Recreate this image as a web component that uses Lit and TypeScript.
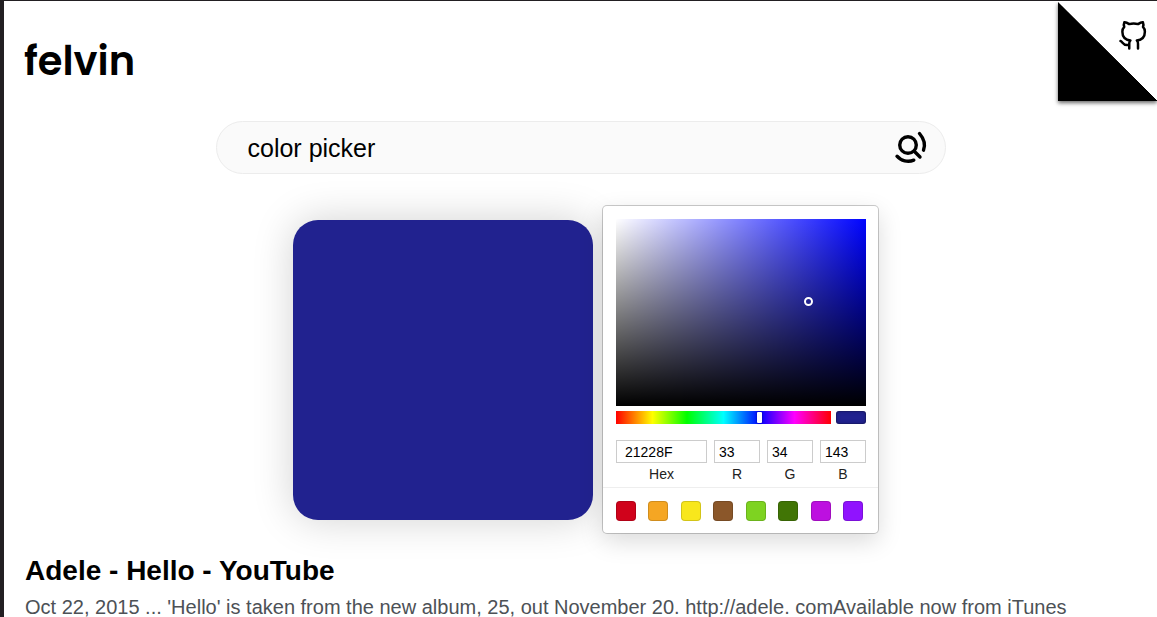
import { LitElement, html, css } from "lit";
import { customElement, state } from "lit/decorators.js";
import { styleMap } from "lit/directives/style-map.js";

const PRESETS = ["#d0021b", "#f5a623", "#f8e71c", "#8b572a", "#7ed321", "#417505", "#bd10e0", "#9013fe"];

@customElement("color-picker")
export class ColorPicker extends LitElement {
  static styles = css`
    :host { display: flex; justify-content: center; align-items: flex-start; gap: 10px; padding-left: 10px; }
    * { box-sizing: border-box; }
    .preview { width: 300px; height: 300px; margin-top: 14px; border-radius: 25px; box-shadow: 0 0 40px rgba(0, 0, 0, 0.18); }
    .panel {
      position: relative; width: 275px; background: #fff; border-radius: 4px;
      box-shadow: 0 0 0 1px rgba(0, 0, 0, 0.2), 0 8px 24px rgba(0, 0, 0, 0.15);
    }
    .controls { padding: 13px 12px 5px 13px; }
    .saturation {
      position: relative; height: 187px;
      background: linear-gradient(to top, #000, transparent), linear-gradient(to right, #fff, transparent), #0004ff;
    }
    .pointer {
      position: absolute; width: 9px; height: 9px; margin: -4px; border-radius: 50%;
      border: 2px solid #fff;
    }
    .bars { display: flex; gap: 5px; margin-top: 5px; height: 13px; }
    .hue {
      appearance: none; flex: 1; min-width: 0; height: 13px; margin: 0;
      background: linear-gradient(to right, #f00 0%, #ff0 17%, #0f0 33%, #0ff 50%, #00f 67%, #f0f 83%, #f00 100%);
    }
    .hue::-webkit-slider-thumb {
      appearance: none; width: 5px; height: 11px; border-radius: 1px; background: #fff;
      box-shadow: 0 0 2px rgba(0, 0, 0, 0.6);
    }
    .current { width: 30px; border-radius: 3px; box-shadow: inset 0 0 0 1px rgba(0, 0, 0, 0.15), inset 0 0 4px rgba(0, 0, 0, 0.25); }
    .fields { display: grid; grid-template-columns: 91fr 46fr 46fr 46fr; gap: 7px; margin-top: 16px; }
    .field { display: flex; flex-direction: column; text-align: center; color: #222; font-size: 14px; line-height: 16px; gap: 3px; }
    .field input {
      width: 100%; height: 23px; padding: 0 4px; border: 1px solid #ccc; color: #000; background: #fff;
      font: inherit; border-radius: 0;
    }
    .field input.hex { padding: 0 8px; }
    .presets { display: flex; justify-content: space-between; padding: 13px 15px 12px 13px; border-top: 1px solid #eee; }
    .preset { width: 20px; height: 20px; padding: 0; border: 0; border-radius: 4px; box-shadow: inset 0 0 0 1px rgba(0, 0, 0, 0.15); }
  `;

  @state() private color = "#21228f";

  render() {
    const n = parseInt(this.color.slice(1), 16);
    const rgb = [n >> 16, (n >> 8) & 255, n & 255];
    const max = Math.max(...rgb);
    const min = Math.min(...rgb);
    const fill = styleMap({ background: this.color });
    return html`
      <div class="preview" style=${fill}></div>
      <div class="panel">
        <div class="controls">
          <div class="saturation">
            <div class="pointer" style=${styleMap({
              left: `${(1 - min / max) * 100}%`,
              top: `${(1 - max / 255) * 100}%`,
            })}></div>
          </div>
          <div class="bars">
            <input class="hue" type="range" min="0" max="360" .value=${"241"} aria-label="Hue" />
            <div class="current" style=${fill}></div>
          </div>
          <div class="fields">
            <label class="field"><input class="hex" .value=${this.color.slice(1).toUpperCase()} />Hex</label>
            ${["R", "G", "B"].map((name, i) => html`
              <label class="field"><input .value=${String(rgb[i])} />${name}</label>`)}
          </div>
        </div>
        <div class="presets">
          ${PRESETS.map((c) => html`
            <button class="preset" aria-label=${c} style=${styleMap({ background: c })}
              @click=${() => (this.color = c)}></button>`)}
        </div>
      </div>
    `;
  }
}

@customElement("app-root")
export class AppRoot extends LitElement {
  static styles = css`
    :host {
      display: block; position: relative; box-sizing: border-box; height: 100vh; overflow: hidden;
      border-top: 1px solid #221f22; border-left: 4px solid #221f22; background: #fff; color: #000;
      font-family: "Liberation Sans", Arial, sans-serif;
    }
    * { box-sizing: border-box; }
    .logo {
      display: block; margin: 36px 20px 0; font: 600 40px/48px Poppins, Inter, sans-serif;
      color: #000; text-decoration: none;
    }
    .corner {
      position: absolute; top: 1px; right: 0; width: 99px; height: 99px;
      background: linear-gradient(45deg, #000 50%, #fff 50.5%); box-shadow: 0 2px 4px rgba(0, 0, 0, 0.6);
      clip-path: polygon(-8px 0, 0 0, 100% 99%, 100% 110%, -8px 110%);
    }
    .github { position: absolute; top: 20px; right: 9px; display: block; color: #000; }
    svg { display: block; overflow: visible; fill: none; stroke: currentColor; stroke-linecap: round; stroke-linejoin: round; }
    .search {
      display: flex; align-items: center; width: 730px; max-width: 90%; height: 53px; margin: 36px auto 0;
      padding: 0 18px 0 31px; border: 1px solid #ececec; border-radius: 27px; background: #fafafa;
    }
    .search input {
      flex: 1; min-width: 0; padding: 0; border: 0; outline: 0; background: none; color: #000;
      font: 25px/32px "Liberation Sans", Arial, sans-serif;
    }
    .search button { padding: 0; border: 0; background: none; color: #000; }
    color-picker { margin-top: 32px; }
    .result { padding: 0 21px; margin-top: 21px; }
    h2 { margin: 0; font-size: 28px; line-height: 34px; }
    h2 a { color: inherit; text-decoration: none; }
    p { margin: 7px 0 0; font-size: 20px; line-height: 24px; color: #4d5156; }
  `;

  render() {
    return html`
      <a class="logo" href="#">felvin</a>
      <div class="corner"></div>
      <a class="github" href="#" aria-label="GitHub">
        <svg width="30" height="30" viewBox="0 0 24 24" stroke-width="2">
          <path d="M9 19c-5 1.5-5-2.500-7-3m14 6v-3.870a3.370 3.370 0 0 0-.94-2.610c3.140-.35 6.440-1.540 6.440-7A5.440 5.440 0 0 0 20 4.770 5.070 5.070 0 0 0 19.910 1S18.730.65 16 2.480a13.380 13.380 0 0 0-7 0C6.270.65 5.090 1 5.090 1A5.070 5.070 0 0 0 5 4.770a5.440 5.440 0 0 0-1.500 3.780c0 5.420 3.300 6.610 6.440 7A3.370 3.370 0 0 0 9 18.130V22" />
        </svg>
      </a>
      <form class="search" @submit=${(e: Event) => e.preventDefault()}>
        <input type="text" .value=${"color picker"} aria-label="Search" />
        <button aria-label="Search">
          <svg width="33" height="33" viewBox="0 0 33 33" stroke-width="3.4">
            <circle cx="14" cy="14" r="8.3" />
            <path d="M20.500 20.500L26 26M25.500 2.500C29.800 7.500 31.600 13.500 29.500 19.200M3 25.200C7 30 14 31.500 19.800 29.200" />
          </svg>
        </button>
      </form>
      <color-picker></color-picker>
      <section class="result">
        <h2><a href="#">Adele - Hello - YouTube</a></h2>
        <p>Oct 22, 2015 ... 'Hello' is taken from the new album, 25, out November 20. http://adele. comAvailable now from iTunes</p>
      </section>
    `;
  }
}
